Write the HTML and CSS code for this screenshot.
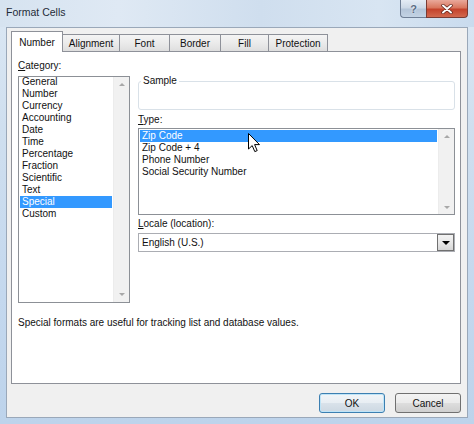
FILE: index.html
```html
<!DOCTYPE html>
<html lang="en">
<head>
<meta charset="utf-8">
<title>Format Cells</title>
<link rel="stylesheet" href="styles.css">
</head>
<body>
<div class="window">
  <div class="titlebar">
    <span class="title">Format Cells</span>
    <div class="caption">
      <div class="cap-btn help">?</div>
      <div class="cap-btn close">
        <svg width="12" height="10" viewBox="0 0 12 10">
          <path d="M2 1.5 L10 8.5 M10 1.5 L2 8.5" stroke="#5a2018" stroke-width="3.4" stroke-linecap="round"/>
          <path d="M2 1.5 L10 8.5 M10 1.5 L2 8.5" stroke="#ffffff" stroke-width="2" stroke-linecap="round"/>
        </svg>
      </div>
    </div>
  </div>
  <div class="client">
    <div class="tabs">
      <div class="tab active t-number">Number</div>
      <div class="tab t-alignment">Alignment</div>
      <div class="tab t-font">Font</div>
      <div class="tab t-border">Border</div>
      <div class="tab t-fill">Fill</div>
      <div class="tab t-protection">Protection</div>
    </div>
    <div class="panel">
      <div class="top-row">
        <div class="left-col">
          <div class="label"><u>C</u>ategory:</div>
          <div class="listbox cat-list">
            <ul class="items">
              <li class="item">General</li>
              <li class="item">Number</li>
              <li class="item">Currency</li>
              <li class="item">Accounting</li>
              <li class="item">Date</li>
              <li class="item">Time</li>
              <li class="item">Percentage</li>
              <li class="item">Fraction</li>
              <li class="item">Scientific</li>
              <li class="item">Text</li>
              <li class="item sel">Special</li>
              <li class="item">Custom</li>
            </ul>
            <div class="vscroll">
              <span class="arrow up"></span>
              <span class="arrow down"></span>
            </div>
          </div>
        </div>
        <div class="right-col">
          <fieldset class="sample">
            <legend>Sample</legend>
          </fieldset>
          <div class="label type-label"><u>T</u>ype:</div>
          <div class="listbox type-list">
            <ul class="items padded">
              <li class="item sel">Zip Code</li>
              <li class="item">Zip Code + 4</li>
              <li class="item">Phone Number</li>
              <li class="item">Social Security Number</li>
            </ul>
            <div class="vscroll">
              <span class="arrow up"></span>
              <span class="arrow down"></span>
            </div>
          </div>
          <div class="label locale-label"><u>L</u>ocale (location):</div>
          <div class="combo">
            <span class="combo-text">English (U.S.)</span>
            <span class="combo-btn"><span class="tri"></span></span>
          </div>
        </div>
      </div>
      <p class="desc">Special formats are useful for tracking list and database values.</p>
    </div>
    <div class="buttons">
      <div class="btn default">OK</div>
      <div class="btn">Cancel</div>
    </div>
  </div>
  <svg class="cursor" width="13" height="20" viewBox="0 0 13 20">
    <path d="M0.5 0.5 L0.5 16 L4.2 12.6 L6.8 18.6 L9.2 17.6 L6.6 11.6 L11.5 11.6 Z" fill="#ffffff" stroke="#000000" stroke-width="1" stroke-linejoin="miter"/>
  </svg>
</div>
</body>
</html>
```

FILE: styles.css
```css
* { box-sizing: border-box; }
html, body { margin: 0; padding: 0; }
body {
  width: 474px;
  height: 424px;
  overflow: hidden;
  font-family: "Liberation Sans", Arial, sans-serif;
  font-size: 10px;
  color: #111111;
}
.window {
  position: relative;
  width: 474px;
  height: 424px;
  display: flex;
  flex-direction: column;
  background: linear-gradient(180deg, #dce8f4 0%, #cfdfef 30%, #c4d8ee 70%, #bdd3eb 100%);
}
.titlebar {
  height: 27px;
  display: flex;
  justify-content: space-between;
  align-items: flex-start;
  padding: 0 6px;
  background: linear-gradient(90deg, #d6e3f0 0%, #dfe9f4 25%, #cfdeee 55%, #d8e5f2 80%, #c9dbee 100%);
}
.title {
  margin-top: 6px;
  font-size: 10.5px;
  color: #1e2b38;
}
.caption { display: flex; }
.cap-btn {
  height: 18px;
  display: flex;
  align-items: center;
  justify-content: center;
  border: 1px solid #6f7f96;
  border-top: none;
}
.help {
  width: 26px;
  border-right: none;
  border-bottom-left-radius: 4px;
  background: linear-gradient(180deg, #e4ecf5 0%, #cdd9e7 45%, #b4c5d9 55%, #c3d3e4 100%);
  color: #5b6c84;
  font-weight: bold;
  font-size: 11px;
  text-shadow: 0 0 2px #ffffff;
}
.close {
  width: 42px;
  border-color: #7a3b33;
  border-bottom-right-radius: 4px;
  background: linear-gradient(180deg, #e9a99b 0%, #d9775f 45%, #c4432c 55%, #d2694f 100%);
}
.client {
  margin: 0 6px;
  height: 391px;
  background: #f0f0f0;
  border: 1px solid #9aa8b9;
  padding: 3px 6px 0 4px;
  display: flex;
  flex-direction: column;
}
.tabs {
  height: 20px;
  display: flex;
  align-items: flex-end;
}
.tab {
  height: 17px;
  border: 1px solid #8e9199;
  border-bottom: none;
  margin-left: -1px;
  background: linear-gradient(180deg, #f4f4f4 0%, #ebebeb 50%, #dedede 100%);
  display: flex;
  align-items: center;
  justify-content: center;
  padding-top: 1px;
}
.tab.active {
  height: 21px;
  margin-left: 0;
  margin-bottom: -1px;
  background: #ffffff;
  position: relative;
  z-index: 1;
  padding-top: 0;
}
.t-number { width: 52px; }
.t-alignment { width: 58px; }
.t-font { width: 51px; }
.t-border { width: 52px; }
.t-fill { width: 49px; }
.t-protection { width: 60px; }
.panel {
  height: 333px;
  background: #ffffff;
  border: 1px solid #8e9199;
  padding: 8px 0 0 6px;
}
.top-row {
  display: flex;
  gap: 8px;
  align-items: flex-start;
}
.label {
  height: 12px;
  line-height: 12px;
}
.left-col {
  width: 112px;
  display: flex;
  flex-direction: column;
  gap: 4px;
}
.listbox {
  border: 1px solid #8c9096;
  background: #ffffff;
  display: flex;
}
.cat-list { height: 227px; }
.items {
  list-style: none;
  margin: 0;
  padding: 0 1px;
  flex: 1;
  min-width: 0;
}
.cat-list .items { margin-top: -1px; }
.items.padded { padding: 1px; }
.item {
  height: 12px;
  line-height: 12px;
  padding-left: 2px;
  white-space: nowrap;
  overflow: hidden;
}
.item.sel {
  background: #3399ff;
  color: #ffffff;
}
.vscroll {
  width: 16px;
  background: #f1f1f1;
  border-left: 1px solid #ececec;
  display: flex;
  flex-direction: column;
  justify-content: space-between;
  align-items: center;
  padding: 6px 0;
}
.arrow {
  width: 0;
  height: 0;
  border-left: 3px solid transparent;
  border-right: 3px solid transparent;
}
.arrow.up { border-bottom: 3px solid #a8a8a8; }
.arrow.down { border-top: 3px solid #a8a8a8; }
.right-col {
  width: 317px;
  padding-top: 15px;
  display: flex;
  flex-direction: column;
}
.sample {
  margin: 0;
  padding: 0;
  min-width: 0;
  height: 35px;
  border: 1px solid #d9e1e8;
  border-radius: 3px;
}
.sample legend {
  margin-left: 2px;
  padding: 0 2px;
  line-height: 12px;
}
.type-label { margin-top: 4px; }
.type-list {
  margin-top: 2px;
  height: 87px;
}
.type-list .vscroll { padding: 6px 0 5px; }
.locale-label { margin-top: 3px; }
.combo {
  margin-top: 3px;
  height: 19px;
  border: 1px solid #abadb3;
  display: flex;
  align-items: center;
  justify-content: space-between;
  padding: 0 0 0 3px;
}
.combo-btn {
  width: 17px;
  height: 17px;
  border: 1px solid #707070;
  background: linear-gradient(180deg, #f3f3f3 0%, #e8e8e8 50%, #d6d6d6 100%);
  display: flex;
  align-items: center;
  justify-content: center;
}
.tri {
  width: 0;
  height: 0;
  border-left: 4px solid transparent;
  border-right: 4px solid transparent;
  border-top: 4px solid #000000;
}
.desc {
  margin: 14px 0 0;
  line-height: 12px;
}
.buttons {
  margin-top: 9px;
  display: flex;
  justify-content: flex-end;
  gap: 10px;
}
.btn {
  width: 66px;
  height: 20px;
  border: 1px solid #707070;
  border-radius: 3px;
  background: linear-gradient(180deg, #f3f3f3 0%, #ebebeb 48%, #dddddd 52%, #cfcfcf 100%);
  display: flex;
  align-items: center;
  justify-content: center;
}
.btn.default {
  border-color: #3c7fb1;
  box-shadow: inset 0 0 0 1px #bfe4f7;
  background: linear-gradient(180deg, #f1f5f8 0%, #e8eef3 48%, #d9e2ea 52%, #cdd8e2 100%);
}
.cursor {
  position: absolute;
  left: 248px;
  top: 133px;
}
```
